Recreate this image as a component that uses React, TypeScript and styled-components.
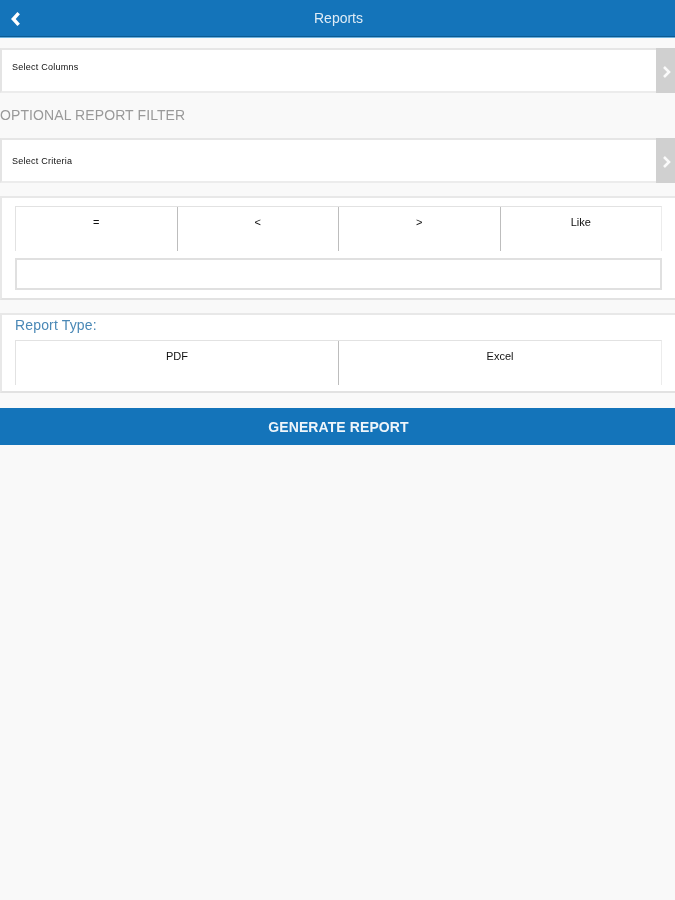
import { createGlobalStyle, styled } from "styled-components";

const GlobalStyle = createGlobalStyle`
  html, body {
    margin: 0;
    padding: 0;
    background: #f9f9f9;
    font-family: "Liberation Sans", Arial, sans-serif;
  }
`;

// the reference is a soft upscaled capture
const Page = styled.div`
  width: 675px;
  height: 900px;
  background: #f9f9f9;
  overflow: hidden;
  filter: blur(0.5px);
`;

const Header = styled.header`
  height: 36px;
  padding-left: 2px;
  background: #1474ba;
  border-bottom: 1px solid #0c5a92;
  box-shadow: 0 1px 0 #6db2de;
  display: flex;
  align-items: center;
  justify-content: center;
  position: relative;
  color: #dfecf6;
  font-size: 14px;
`;

const BackIcon = styled.svg`
  position: absolute;
  left: 10px;
  top: 11px;
  width: 12px;
  height: 16px;
`;

const Content = styled.main`
  padding-top: 11px;
  display: flex;
  flex-direction: column;
`;

const SelectRow = styled.div`
  height: 41px;
  background: #fff;
  border-top: 2px solid #e6e6e6;
  border-bottom: 2px solid #ececec;
  border-left: 2px solid #e4e4e4;
  display: flex;
  align-items: stretch;
  justify-content: space-between;
`;

const SelectText = styled.span<{ $top: number }>`
  font-size: 9px;
  letter-spacing: 0.25px;
  color: #111;
  padding: ${(p) => p.$top}px 0 0 10px;
`;

const Arrow = styled.div`
  width: 19px;
  margin-top: -2px;
  margin-bottom: -2px;
  background: #d0d0d0;
  display: flex;
  align-items: center;
  justify-content: center;
`;

const ArrowIcon = styled.svg`
  width: 10px;
  height: 14px;
  margin-left: 2px;
  margin-top: 2px;
`;

const SectionLabel = styled.div`
  height: 45px;
  line-height: 45px;
  font-size: 14px;
  color: #999;
  letter-spacing: 0.1px;
`;

const Card = styled.section<{ $padTop: number; $padBottom: number; $gap: number }>`
  margin-top: ${(p) => p.$gap}px;
  background: #fff;
  border-top: 2px solid #e8e8e8;
  border-bottom: 2px solid #e2e2e2;
  border-left: 2px solid #e8e8e8;
  padding: ${(p) => p.$padTop}px 13px ${(p) => p.$padBottom}px;
`;

const CardTitle = styled.div`
  font-size: 14px;
  line-height: 18px;
  letter-spacing: 0.15px;
  color: #4a88b6;
  margin: 1px 0 6px;
`;

const ButtonRow = styled.div`
  height: 44px;
  display: flex;
  border-top: 1px solid #e2e2e2;
  border-right: 1px solid #ececec;
`;

const OptionButton = styled.div`
  flex: 1;
  border-left: 1px solid #bdbdbd;
  text-align: center;
  font-size: 11px;
  line-height: 13px;
  padding-top: 9px;
  color: #111;

  &:first-child {
    border-left-color: #e2e2e2;
  }
`;

const TextBox = styled.div`
  height: 28px;
  margin-top: 7px;
  border: 2px solid #e0e0e0;
  background: #fff;
`;

const GenerateButton = styled.div`
  margin-top: 15px;
  height: 37px;
  padding-left: 2px;
  background: #1474ba;
  color: #eef5fa;
  font-size: 14px;
  font-weight: bold;
  letter-spacing: 0.1px;
  display: flex;
  align-items: center;
  justify-content: center;
`;

const Chevron = ({ right }: { right?: boolean }) => (
  <path
    d={right ? "M2 2l5 5-5 5" : "M8 2L3 7.5 8 13"}
    fill="none"
    stroke={right ? "#fafafa" : "#fff"}
    strokeWidth={right ? "2.6" : "3.2"}
  />
);

export default function App() {
  return (
    <Page>
      <GlobalStyle />
      <Header>
        <BackIcon viewBox="0 0 11 15">
          <Chevron />
        </BackIcon>
        Reports
      </Header>
      <Content>
        <SelectRow>
          <SelectText $top={12}>Select Columns</SelectText>
          <Arrow>
            <ArrowIcon viewBox="0 0 10 14">
              <Chevron right />
            </ArrowIcon>
          </Arrow>
        </SelectRow>
        <SectionLabel>OPTIONAL REPORT FILTER</SectionLabel>
        <SelectRow>
          <SelectText $top={16}>Select Criteria</SelectText>
          <Arrow>
            <ArrowIcon viewBox="0 0 10 14">
              <Chevron right />
            </ArrowIcon>
          </Arrow>
        </SelectRow>
        <Card $gap={13} $padTop={8} $padBottom={8}>
          <ButtonRow>
            <OptionButton>=</OptionButton>
            <OptionButton>&lt;</OptionButton>
            <OptionButton>&gt;</OptionButton>
            <OptionButton>Like</OptionButton>
          </ButtonRow>
          <TextBox />
        </Card>
        <Card $gap={13} $padTop={0} $padBottom={6}>
          <CardTitle>Report Type:</CardTitle>
          <ButtonRow>
            <OptionButton>PDF</OptionButton>
            <OptionButton>Excel</OptionButton>
          </ButtonRow>
        </Card>
        <GenerateButton>GENERATE REPORT</GenerateButton>
      </Content>
    </Page>
  );
}
